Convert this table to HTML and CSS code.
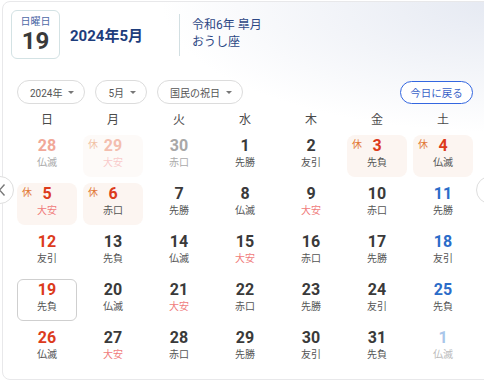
FILE: index.html
```html
<!DOCTYPE html>
<html lang="ja">
<head>
<meta charset="utf-8">
<link rel="stylesheet" href="styles.css">
</head>
<body>
<div class="card">
  <header class="head">
    <div class="datebox">
      <span class="dow">日曜日</span>
      <span class="dnum">19</span>
    </div>
    <div class="title">2024年5月</div>
    <div class="divider"></div>
    <div class="era">
      <span>令和6年 皐月</span>
      <span>おうし座</span>
    </div>
  </header>
  <div class="body">
    <div class="controls">
      <button class="pill">2024年<i class="caret"></i></button>
      <button class="pill">5月<i class="caret"></i></button>
      <button class="pill">国民の祝日<i class="caret"></i></button>
      <button class="today">今日に戻る</button>
    </div>
    <div class="weekdays">
      <span>日</span><span>月</span><span>火</span><span>水</span><span>木</span><span>金</span><span>土</span>
    </div>
    <div class="grid">
      <div class="cell prev sun"><b>28</b><small>仏滅</small></div>
      <div class="cell prev hol faded"><em>休</em><b>29</b><small class="ta">大安</small></div>
      <div class="cell prev"><b>30</b><small>赤口</small></div>
      <div class="cell"><b>1</b><small>先勝</small></div>
      <div class="cell"><b>2</b><small>友引</small></div>
      <div class="cell hol"><em>休</em><b>3</b><small>先負</small></div>
      <div class="cell hol"><em>休</em><b>4</b><small>仏滅</small></div>

      <div class="cell hol"><em>休</em><b>5</b><small class="ta">大安</small></div>
      <div class="cell hol"><em>休</em><b>6</b><small>赤口</small></div>
      <div class="cell"><b>7</b><small>先勝</small></div>
      <div class="cell"><b>8</b><small>仏滅</small></div>
      <div class="cell"><b>9</b><small class="ta">大安</small></div>
      <div class="cell"><b>10</b><small>赤口</small></div>
      <div class="cell sat"><b>11</b><small>先勝</small></div>

      <div class="cell sun"><b>12</b><small>友引</small></div>
      <div class="cell"><b>13</b><small>先負</small></div>
      <div class="cell"><b>14</b><small>仏滅</small></div>
      <div class="cell"><b>15</b><small class="ta">大安</small></div>
      <div class="cell"><b>16</b><small>赤口</small></div>
      <div class="cell"><b>17</b><small>先勝</small></div>
      <div class="cell sat"><b>18</b><small>友引</small></div>

      <div class="cell sun current"><b>19</b><small>先負</small></div>
      <div class="cell"><b>20</b><small>仏滅</small></div>
      <div class="cell"><b>21</b><small class="ta">大安</small></div>
      <div class="cell"><b>22</b><small>赤口</small></div>
      <div class="cell"><b>23</b><small>先勝</small></div>
      <div class="cell"><b>24</b><small>友引</small></div>
      <div class="cell sat"><b>25</b><small>先負</small></div>

      <div class="cell sun"><b>26</b><small>仏滅</small></div>
      <div class="cell"><b>27</b><small class="ta">大安</small></div>
      <div class="cell"><b>28</b><small>赤口</small></div>
      <div class="cell"><b>29</b><small>先勝</small></div>
      <div class="cell"><b>30</b><small>友引</small></div>
      <div class="cell"><b>31</b><small>先負</small></div>
      <div class="cell next sat"><b>1</b><small>仏滅</small></div>
    </div>
  </div>
  <button class="nav nav-prev" aria-label="前月">
    <svg width="10" height="14" viewBox="0 0 10 14"><path d="M7.5 1.5 L2.5 7 L7.5 12.5" fill="none" stroke="#777" stroke-width="1.4"/></svg>
  </button>
  <button class="nav nav-next" aria-label="翌月">
    <svg width="10" height="14" viewBox="0 0 10 14"><path d="M2.5 1.5 L7.5 7 L2.5 12.5" fill="none" stroke="#777" stroke-width="1.4"/></svg>
  </button>
</div>
</body>
</html>
```

FILE: styles.css
```css
html, body {
  margin: 0;
  padding: 0;
  overflow: hidden;
  background: #fff;
}
body {
  font-family: Roboto, "Noto Sans CJK JP", sans-serif;
  color: #3a3a3a;
}
.card {
  position: relative;
  box-sizing: border-box;
  margin: 1px 0 0 2px;
  width: 500px;
  height: 379px;
  border: 1px solid #e8e8ea;
  border-radius: 8px;
  background:
    radial-gradient(ellipse 340px 130px at 100% 0, #e5e9f2 0%, rgba(255,255,255,0) 100%),
    #fff;
}
.head {
  display: flex;
  align-items: center;
  padding: 8px 0 0 8px;
  height: 49px;
}
.datebox {
  box-sizing: border-box;
  width: 49px;
  height: 49px;
  border: 1px solid #d3e2e4;
  border-radius: 6px;
  background: #fff;
  display: flex;
  flex-direction: column;
  align-items: center;
}
.dow {
  font-size: 10px;
  line-height: 12px;
  margin-top: 5px;
  color: #4d6aa6;
}
.dnum {
  font-size: 24px;
  font-weight: 700;
  line-height: 26px;
  color: #3a3a3a;
}
.title {
  margin-left: 10px;
  font-size: 15px;
  font-weight: 700;
  color: #1d3d7c;
  margin-top: -1px;
}
.divider {
  width: 1px;
  height: 42px;
  background: #d2dfe2;
  margin-left: 36px;
}
.era {
  margin-left: 12px;
  display: flex;
  flex-direction: column;
  font-size: 12px;
  line-height: 17px;
  color: #2c4784;
  margin-top: -2px;
}
.body {
  padding-left: 14px;
  width: 456px;
}
.controls {
  margin-top: 21px;
  display: flex;
  align-items: center;
  gap: 10px;
  height: 24px;
}
.pill {
  box-sizing: border-box;
  height: 24px;
  padding: 0 10px 0 12px;
  border: 1px solid #dcdcdc;
  border-radius: 12px;
  background: #fff;
  font-family: Roboto, "Noto Sans CJK JP", sans-serif;
  font-size: 10px;
  color: #555;
  display: flex;
  align-items: center;
  gap: 6px;
}
.caret {
  width: 0;
  height: 0;
  border-left: 3px solid transparent;
  border-right: 3px solid transparent;
  border-top: 3.5px solid #777;
}
.today {
  margin-left: auto;
  box-sizing: border-box;
  height: 23px;
  width: 73px;
  border: 1px solid #3467e0;
  border-radius: 12px;
  background: #fff;
  font-family: Roboto, "Noto Sans CJK JP", sans-serif;
  font-size: 10.5px;
  color: #3a62c8;
  padding: 0;
}
.weekdays {
  margin-top: 3px;
  display: grid;
  grid-template-columns: repeat(7, 60px);
  column-gap: 6px;
  height: 22px;
  align-items: center;
  text-align: center;
  font-size: 12px;
  color: #4a4a4a;
}
.grid {
  margin-top: 6px;
  display: grid;
  grid-template-columns: repeat(7, 60px);
  grid-auto-rows: 42px;
  gap: 6px;
}
.cell {
  position: relative;
  box-sizing: border-box;
  border-radius: 8px;
  display: flex;
  flex-direction: column;
  align-items: center;
  padding-top: 2px;
}
.cell b {
  font-size: 16px;
  line-height: 18px;
  font-weight: 700;
  color: #3a3a3a;
}
.cell small {
  font-size: 10px;
  line-height: 14px;
  color: #555;
  margin-top: 1px;
}
.cell small.ta { color: #f07b7b; }
.cell em {
  position: absolute;
  top: 3px;
  left: 5px;
  font-style: normal;
  font-size: 10px;
  line-height: 14px;
  color: #e27a38;
}
.hol { background: #fcf5f1; }
.hol b, .sun b { color: #dc3b1c; }
.sat b { color: #2b6cc9; }
.faded { opacity: 0.45; }
.prev.sun b { color: #f1a898; }
.prev small { color: #aaa; }
.prev.hol b { color: #e6704f; }
.prev.hol small.ta { color: #f28a8a; }
.prev:not(.sun):not(.hol) b { color: #a8a8a8; }
.next b { color: #a9c6ea; }
.next small { color: #bbb; }
.current {
  border: 1px solid #cfcfcf;
  border-radius: 6px;
  background: #fff;
  padding-top: 1px;
}
.current small { margin-top: 1px; }
.nav {
  position: absolute;
  top: 174px;
  width: 28px;
  height: 28px;
  border-radius: 50%;
  border: 1px solid #dedede;
  background: #fff;
  padding: 0;
  display: flex;
  align-items: center;
  justify-content: center;
}
.nav-prev { left: -17px; justify-content: flex-end; padding-right: 6px; box-sizing: border-box; }
.nav-next { left: 473px; justify-content: flex-start; padding-left: 6px; box-sizing: border-box; }
```
